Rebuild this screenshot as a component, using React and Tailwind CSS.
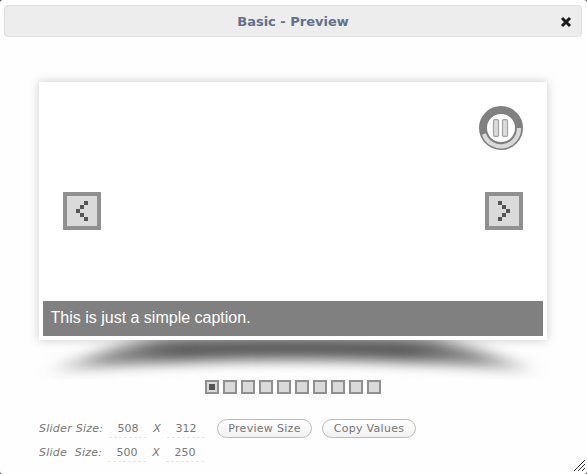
import React from "react";

function Arrow({ flip }) {
  const cells = flip
    ? [[9, 5], [13, 9], [17, 13], [13, 17], [9, 21]]
    : [[17, 5], [13, 9], [9, 13], [13, 17], [17, 21]];
  return (
    <button className="h-[38px] w-[38px] border-4 border-[#909090] bg-[#dadada]">
      <svg width="30" height="30" viewBox="0 0 30 30" shapeRendering="crispEdges" className="block" fill="#555">
        {cells.map(([x, y]) => (
          <rect key={y} x={x} y={y} width="4" height="4" />
        ))}
      </svg>
    </button>
  );
}

function PauseTimer() {
  return (
    <svg width="44" height="44" viewBox="0 0 44 44" className="block">
      <circle cx="22" cy="22" r="18" fill="#fff" stroke="#808080" strokeWidth="8" />
      <path d="M40 22A18 18 0 0 1 4.9 28" fill="none" stroke="#d9d9d9" strokeWidth="4.2" />
      <rect x="14.5" y="13.7" width="5" height="16.6" rx="1" fill="#dcdcdc" stroke="#a2a2a2" strokeWidth="1.2" />
      <rect x="23.5" y="13.7" width="5" height="16.6" rx="1" fill="#dcdcdc" stroke="#a2a2a2" strokeWidth="1.2" />
    </svg>
  );
}

function DropShadow() {
  return (
    <svg width="508" height="40" viewBox="0 0 508 40" className="block overflow-hidden">
      <defs>
        <filter id="soft" x="-10%" y="-80%" width="120%" height="260%" colorInterpolationFilters="sRGB">
          <feGaussianBlur stdDeviation="8 6.5" />
        </filter>
        <linearGradient id="fade">
          <stop offset="0" stopColor="#4c4c4c" stopOpacity="0.3" />
          <stop offset="0.12" stopColor="#4c4c4c" stopOpacity="0.65" />
          <stop offset="0.27" stopColor="#4c4c4c" stopOpacity="0.93" />
          <stop offset="0.73" stopColor="#4c4c4c" stopOpacity="0.93" />
          <stop offset="0.88" stopColor="#4c4c4c" stopOpacity="0.65" />
          <stop offset="1" stopColor="#4c4c4c" stopOpacity="0.3" />
        </linearGradient>
      </defs>
      <path
        d="M8 31C45 19 75 5 120 -1C200 -3 308 -3 388 -1C433 5 463 19 500 31C425 24 340 19.5 254 19.5C168 19.5 83 24 8 31Z"
        fill="url(#fade)"
        filter="url(#soft)"
      />
    </svg>
  );
}

function SizeRow({ label, w, h, labelWidth, children }) {
  return (
    <div className="flex h-6 items-center">
      <span className={`${labelWidth} whitespace-pre pt-0.5 italic tracking-[0.26px]`}>{label}</span>
      <span className="h-[19px] w-[38px] border-b border-dashed border-[#e6e6e6] text-center leading-[19px]">{w}</span>
      <span className="w-5 pt-0.5 text-center text-[11px] italic">X</span>
      <span className="h-[19px] w-[38px] border-b border-dashed border-[#e6e6e6] text-center leading-[19px]">{h}</span>
      {children}
    </div>
  );
}

function Pill({ className, children }) {
  return (
    <button
      className={`h-[19px] shrink-0 whitespace-nowrap rounded-full border border-[#bbb] bg-linear-to-b from-white to-[#f1f1f1] text-center leading-[18px] tracking-[0.3px] ${className}`}
    >
      {children}
    </button>
  );
}

export default function App() {
  return (
    <div className="h-[474px] w-[587px] overflow-hidden bg-[#555] font-['DejaVu_Sans',sans-serif]">
      <div className="relative h-full rounded-[3px] bg-[#fefefe] pt-[5px]">
        <header className="ml-1 flex h-8 w-[578px] items-center rounded-[4px] border border-[#dfdfdf] bg-[#ededed] pr-[9px] pl-[21px]">
          <h1 className="flex-1 pt-0.5 text-center text-[13px] font-bold text-[#64708a]">Basic - Preview</h1>
          <svg width="12" height="12" viewBox="0 0 12 12" stroke="#1c1c1c" strokeWidth="3" className="translate-y-px">
            <path d="M2 2L10 10M10 2L2 10" />
          </svg>
        </header>

        <main className="mt-[45px] ml-[39px] w-[508px]">
          <section className="relative z-10 flex h-[258px] flex-col bg-white p-1 shadow-[0_0_10px_rgba(0,0,0,0.2)]">
            <div className="flex justify-end pt-5 pr-5">
              <PauseTimer />
            </div>
            <div className="mt-[42px] flex justify-between px-5">
              <Arrow />
              <Arrow flip />
            </div>
            <p className="mt-auto h-[35px] bg-[#808080] pl-[7.5px] font-['Liberation_Sans',Arial,sans-serif] text-[16px] leading-[34px] text-white">
              This is just a simple caption.
            </p>
          </section>
          <DropShadow />
          <nav className="ml-[166px] flex gap-1">
            {Array.from({ length: 10 }, (_, i) => (
              <span key={i} className="flex h-[14px] w-[14px] items-center justify-center border-2 border-[#909090] bg-[#dadada]">
                {i === 0 && <span className="h-[6px] w-[6px] bg-[#555]" />}
              </span>
            ))}
          </nav>

          <div className="mt-[22px] text-[11px] text-[#777]">
            <SizeRow label="Slider Size:" w="508" h="312" labelWidth="w-[70px]">
              <Pill className="ml-3 w-[95px]">Preview Size</Pill>
              <Pill className="ml-[10px] w-[94px]">Copy Values</Pill>
            </SizeRow>
            <SizeRow label="Slide  Size:" w="500" h="250" labelWidth="w-[69px]" />
          </div>
        </main>

        <svg width="11" height="11" viewBox="0 0 11 11" shapeRendering="crispEdges" className="absolute right-[2px] bottom-[3px]" stroke="#333" strokeWidth="1">
          <path d="M0 11L11 0M4 11L11 4M8 11L11 8" />
        </svg>
      </div>
    </div>
  );
}
